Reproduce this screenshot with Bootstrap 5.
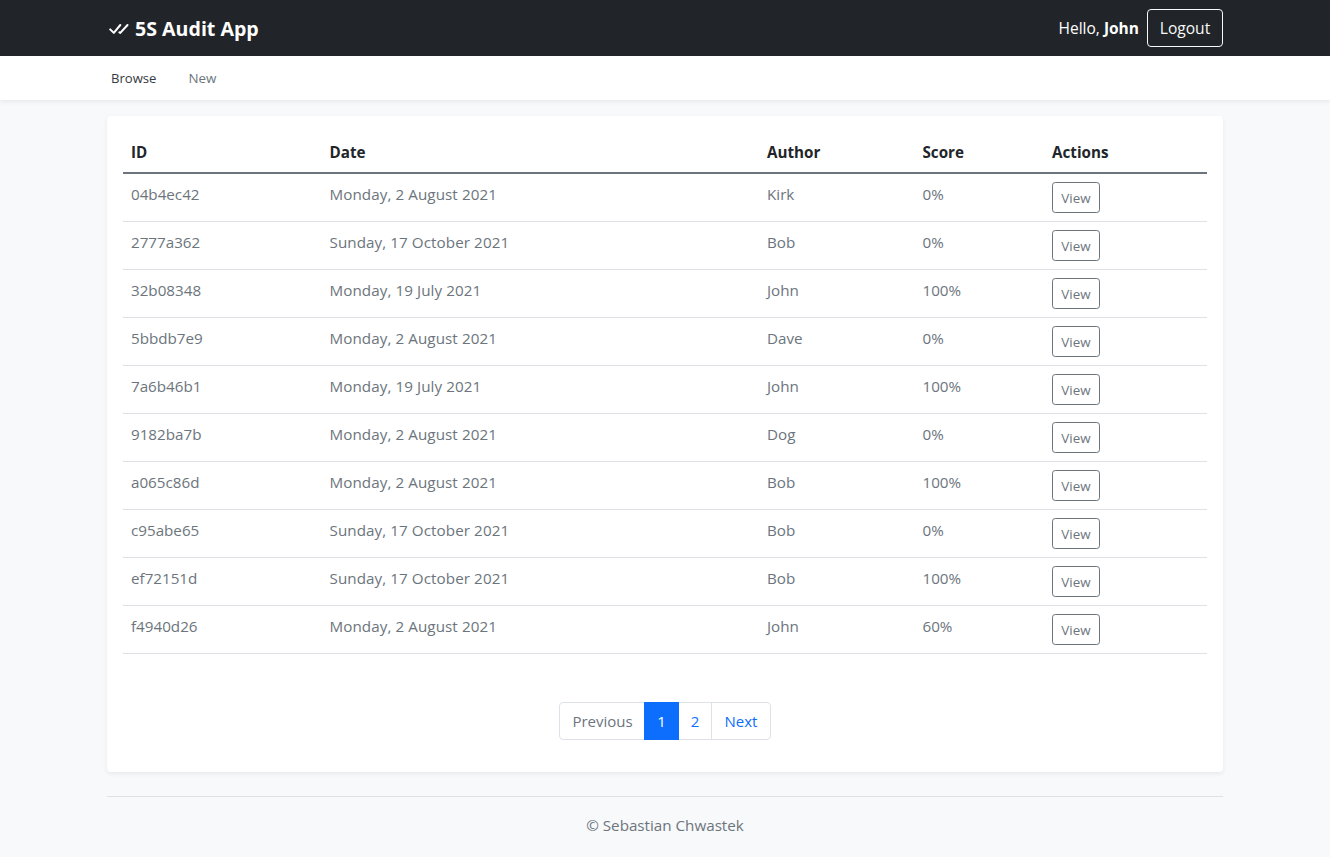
<!DOCTYPE html>
<html lang="en">
<head>
<meta charset="utf-8">
<meta name="viewport" content="width=device-width, initial-scale=1">
<title>5S Audit App</title>
<link href="https://cdn.jsdelivr.net/npm/bootstrap@5.3.0/dist/css/bootstrap.min.css" rel="stylesheet">
<style>
  body { font-family: "Open Sans", "Noto Sans", sans-serif; font-size: 15.2px; line-height: 24px; }
  .app-width { width: 1140px; }
  .topbar { height: 56px; }
  .brand-text { font-size: 19.6px; line-height: 30px; padding-top: 1px; }
  .brand-mark { margin: 1px 6px 0 2px; }
  .hello { font-size: 15.5px; }
  .subnav { height: 44px; font-size: 13.1px; }
  .subnav .nav-link { padding: 12px 16px; line-height: 20px; }
  .subnav .nav-link:first-child { padding-left: 4px; font-weight: 500; color: #343a40; }
  .subnav .text-secondary { font-size: 13.4px; }
  .btn { font-size: 15.6px; line-height: 24px; }
  .btn-sm { font-size: 13.4px; line-height: 21px; width: 48px; height: 31px; padding: 5px 0 3px; border-radius: 3.2px; }
  .btn-logout { width: 76px; height: 38px; padding: 6px 0; border-radius: 4px; }
  .panel { border-radius: 4px; height: 656px; }
  .audits { table-layout: fixed; }
  .audits td { height: 48px; color: #6c757d; }
  .audits td:nth-child(2) { letter-spacing: .08px; }
  .audits > thead th { color: #212529; border-bottom: 0; }
  .audits > tbody { border-top: 2px solid #6c757d; }
  .audits td, .audits th { background: transparent; }
  .page-link { font-size: 15px; line-height: 24px; height: 38px; padding: 6px 0; text-align: center; border-color: #dee2e6; color: #0d6efd; }
  .page-item.disabled .page-link { background: #fff; color: #6c757d; border-color: #dee2e6; }
  .pagination { --bs-pagination-border-radius: 4px; }
  .w-prev { width: 86px; padding-left: 1px; } .w-num { width: 35px; } .w-num2 { width: 34px; } .w-next { width: 60px; }
</style>
</head>
<body class="bg-light">
<header class="topbar bg-dark text-white">
  <div class="container app-width h-100 d-flex align-items-center justify-content-between">
    <a class="d-flex align-items-center text-white text-decoration-none" href="#">
      <svg class="brand-mark" width="20" height="12" viewBox="0 0 20 12" fill="none" stroke="#fff" stroke-width="2" stroke-linecap="round" stroke-linejoin="round"><path d="M1.2 6.4l3.6 3.5 6.5-7.9M10.4 9.3l.9.6L18.5 2"/></svg>
      <span class="brand-text fw-bold">5S Audit App</span>
    </a>
    <div class="d-flex align-items-center gap-2">
      <span class="hello">Hello, <b>John</b></span>
      <a class="btn btn-outline-light btn-logout" href="#">Logout</a>
    </div>
  </div>
</header>
<nav class="subnav bg-white shadow-sm">
  <div class="container app-width d-flex">
    <a class="nav-link" href="#">Browse</a>
    <a class="nav-link text-secondary" href="#">New</a>
  </div>
</nav>
<main class="container app-width">
  <section class="panel bg-white shadow-sm p-3 mt-3">
    <table class="table audits mb-5">
      <colgroup><col style="width:198.5px"><col style="width:437.5px"><col style="width:155.5px"><col style="width:129.5px"><col></colgroup>
      <thead><tr><th>ID</th><th>Date</th><th>Author</th><th>Score</th><th>Actions</th></tr></thead>
      <tbody>
        <tr><td>04b4ec42</td><td>Monday, 2 August 2021</td><td>Kirk</td><td>0%</td><td><a class="btn btn-sm btn-outline-secondary" href="#">View</a></td></tr>
        <tr><td>2777a362</td><td>Sunday, 17 October 2021</td><td>Bob</td><td>0%</td><td><a class="btn btn-sm btn-outline-secondary" href="#">View</a></td></tr>
        <tr><td>32b08348</td><td>Monday, 19 July 2021</td><td>John</td><td>100%</td><td><a class="btn btn-sm btn-outline-secondary" href="#">View</a></td></tr>
        <tr><td>5bbdb7e9</td><td>Monday, 2 August 2021</td><td>Dave</td><td>0%</td><td><a class="btn btn-sm btn-outline-secondary" href="#">View</a></td></tr>
        <tr><td>7a6b46b1</td><td>Monday, 19 July 2021</td><td>John</td><td>100%</td><td><a class="btn btn-sm btn-outline-secondary" href="#">View</a></td></tr>
        <tr><td>9182ba7b</td><td>Monday, 2 August 2021</td><td>Dog</td><td>0%</td><td><a class="btn btn-sm btn-outline-secondary" href="#">View</a></td></tr>
        <tr><td>a065c86d</td><td>Monday, 2 August 2021</td><td>Bob</td><td>100%</td><td><a class="btn btn-sm btn-outline-secondary" href="#">View</a></td></tr>
        <tr><td>c95abe65</td><td>Sunday, 17 October 2021</td><td>Bob</td><td>0%</td><td><a class="btn btn-sm btn-outline-secondary" href="#">View</a></td></tr>
        <tr><td>ef72151d</td><td>Sunday, 17 October 2021</td><td>Bob</td><td>100%</td><td><a class="btn btn-sm btn-outline-secondary" href="#">View</a></td></tr>
        <tr><td>f4940d26</td><td>Monday, 2 August 2021</td><td>John</td><td>60%</td><td><a class="btn btn-sm btn-outline-secondary" href="#">View</a></td></tr>
      </tbody>
    </table>
    <ul class="pagination justify-content-center mb-0">
      <li class="page-item disabled"><a class="page-link w-prev">Previous</a></li>
      <li class="page-item active"><a class="page-link w-num" href="#">1</a></li>
      <li class="page-item"><a class="page-link w-num2" href="#">2</a></li>
      <li class="page-item"><a class="page-link w-next" href="#">Next</a></li>
    </ul>
  </section>
  <footer class="border-top text-secondary text-center mt-4 pt-3">© Sebastian Chwastek</footer>
</main>
<script src="https://cdn.jsdelivr.net/npm/bootstrap@5.3.0/dist/js/bootstrap.bundle.min.js"></script>
</body>
</html>
